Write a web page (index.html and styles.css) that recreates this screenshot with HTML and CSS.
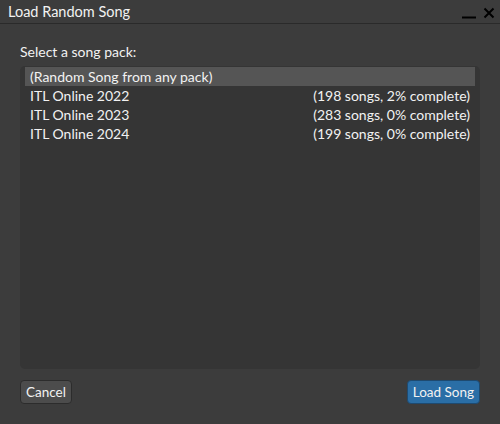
FILE: index.html
```html
<!DOCTYPE html>
<html>
<head>
<meta charset="utf-8">
<link rel="stylesheet" href="styles.css">
</head>
<body>
<div class="window">
  <div class="titlebar">
    <span class="title">Load Random Song</span>
    <div class="controls">
      <svg class="min" width="14" height="14" viewBox="0 0 14 14"><path d="M0 11.5H14" stroke="#000" stroke-width="2"/></svg>
      <svg class="close" width="12" height="12" viewBox="0 0 12 12"><path d="M1.5 1.5L10.5 10.5M10.5 1.5L1.5 10.5" stroke="#000" stroke-width="2"/></svg>
    </div>
  </div>
  <div class="content">
    <div class="label">Select a song pack:</div>
    <div class="list">
      <div class="row selected"><span>(Random Song from any pack)</span></div>
      <div class="row"><span>ITL Online 2022</span><span>(198 songs, 2% complete)</span></div>
      <div class="row"><span>ITL Online 2023</span><span>(283 songs, 0% complete)</span></div>
      <div class="row"><span>ITL Online 2024</span><span>(199 songs, 0% complete)</span></div>
    </div>
    <div class="buttons">
      <button class="btn">Cancel</button>
      <button class="btn primary">Load Song</button>
    </div>
  </div>
</div>
</body>
</html>
```
FILE: styles.css
```css
html, body {
  margin: 0;
  padding: 0;
  background: #3c3c3c;
}
.window {
  width: 500px;
  height: 424px;
  display: flex;
  flex-direction: column;
  font-family: Lato, "Open Sans", sans-serif;
  color: #f2f2f2;
  background: #3c3c3c;
}
.titlebar {
  border-bottom: 1px solid #2a2a2a;
  display: flex;
  align-items: center;
  justify-content: space-between;
  padding: 0 5px 0 8px;
  box-sizing: border-box;
  height: 24px;
}
.title {
  font-size: 14.5px;
}
.controls {
  display: flex;
  align-items: center;
  gap: 7px;
  margin-top: 2px;
}
.content {
  flex: 1;
  display: flex;
  flex-direction: column;
  padding: 19px 20px 20px 20px;
}
.label {
  font-size: 14px;
  line-height: 18px;
  margin-bottom: 5px;
}
.list {
  flex: 1;
  background: #353535;
  border-radius: 5px;
  padding: 1px 5px;
}
.row {
  display: flex;
  justify-content: space-between;
  padding: 0 5px;
  height: 19px;
  line-height: 19px;
  font-size: 14px;
}
.row.selected {
  background: #555555;
}
.buttons {
  display: flex;
  justify-content: space-between;
  margin-top: 11px;
}
.btn {
  font-family: Lato, "Open Sans", sans-serif;
  font-size: 13.5px;
  color: #f2f2f2;
  background: #4c4c4c;
  border: 1px solid #2c2c2c;
  border-radius: 4px;
  height: 24px;
  padding: 0 5px;
}
.btn.primary {
  background: #2a6ea6;
  border-color: #1e4a70;
}
```
